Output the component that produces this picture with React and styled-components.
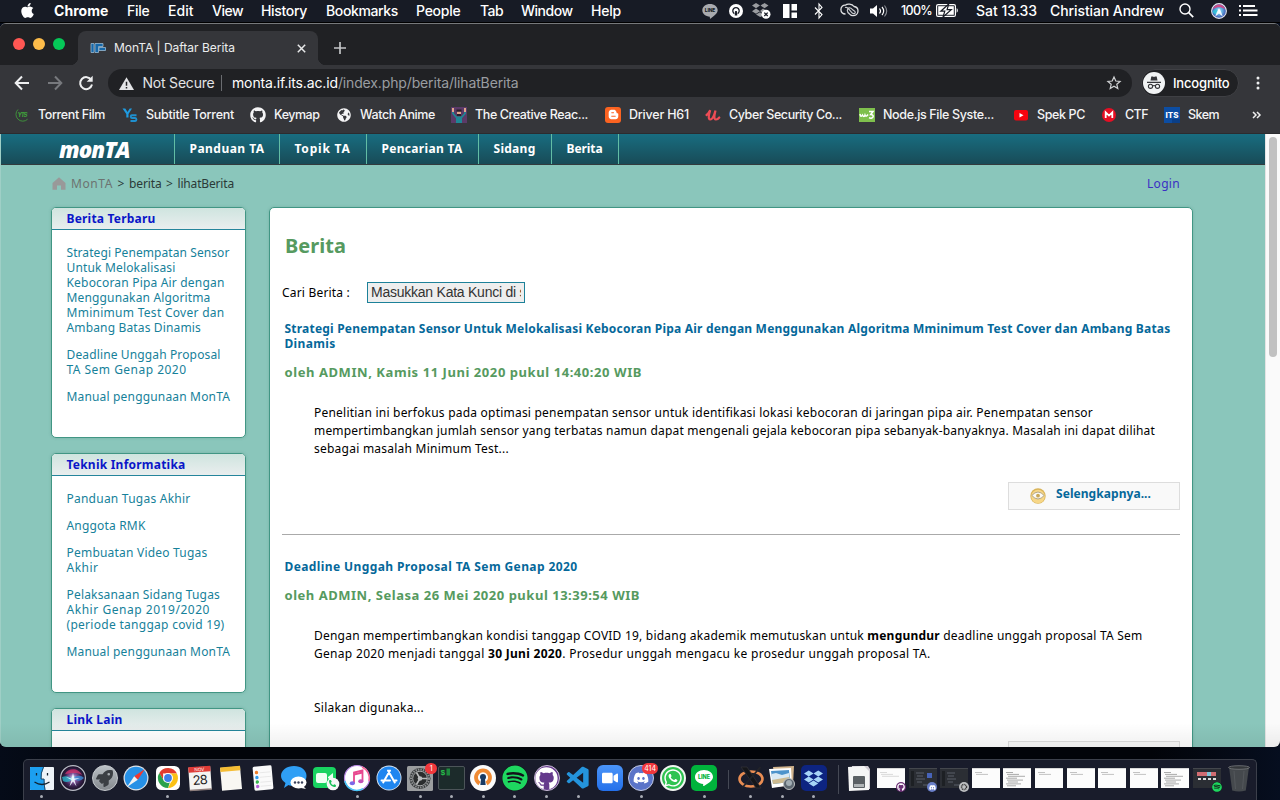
import React, { useLayoutEffect, useRef, useState } from "react";
import styled, { createGlobalStyle, css } from "styled-components";
import {
  FaApple, FaDropbox, FaGithub, FaBluetoothB, FaSpotify, FaWhatsapp, FaDiscord,
  FaBloggerB, FaVideo, FaRocket, FaPhoneAlt, FaGlobeAmericas,
} from "react-icons/fa";
import { VscVscode } from "react-icons/vsc";

const Global = createGlobalStyle`
  * { box-sizing: border-box; }
  body { margin: 0; background: #03060d; overflow: hidden; }
  svg { display: block; overflow: visible; }
`;

const ui = `Inter, Roboto, "Liberation Sans", sans-serif`;
const web = `"Noto Sans", "Open Sans", "Liberation Sans", sans-serif`;

/* Text tracked so that it fills a given width */
const Track = styled.span`
  display: inline-block;
  white-space: pre;
  flex: none;
  width: ${(p) => p.$w}px;
`;
function Fit({ w, box, children }) {
  const ref = useRef(null);
  const [spacing, setSpacing] = useState(0);
  useLayoutEffect(() => {
    const el = ref.current;
    const n = el.textContent.length;
    setSpacing((w - el.getBoundingClientRect().width) / n);
  }, [w]);
  return (
    <Track $w={box || w}>
      <span ref={ref} style={{ letterSpacing: spacing }}>{children}</span>
    </Track>
  );
}

/* ---------- desktop ---------- */
const Desktop = styled.div`
  width: 1280px;
  height: 800px;
  display: flex;
  flex-direction: column;
  overflow: hidden;
  background: linear-gradient(90deg, #050b18, #020409 12%, #020409 90%, #060e1f);
  font-family: ${ui};
`;
const MenuBar = styled.div`
  height: 23px;
  flex: none;
  display: flex;
  align-items: center;
  padding: 0 0 1px 19px;
  background: #171b25;
  border-bottom: 1px solid #000;
  color: #fff;
  font-size: 14px;
  font-weight: 500;
  line-height: 22px;
`;
const MenuSlot = styled.div`
  width: ${(p) => p.$w}px;
  flex: none;
  display: flex;
  align-items: center;
  height: 22px;
  font-weight: ${(p) => (p.$bold ? 700 : 500)};
  font-size: ${(p) => p.$size || 14}px;
  color: #fff;
`;

const menus = [
  ["Chrome", 54.5, 73, true], ["File", 22.5, 41], ["Edit", 25.5, 44], ["View", 31, 49],
  ["History", 46, 65], ["Bookmarks", 72, 90], ["People", 44.5, 64], ["Tab", 23, 41],
  ["Window", 51.5, 70], ["Help", 30, 111],
];

/* ---------- window ---------- */
const Window = styled.div`
  height: 724px;
  flex: none;
  display: flex;
  flex-direction: column;
  overflow: hidden;
  border-top: 1px solid #77797b;
  border-radius: 6px;
  background: #35363a;
  position: relative;
`;
const TabStrip = styled.div`
  height: 41px;
  flex: none;
  display: flex;
  align-items: flex-end;
  background: #202124;
  padding-left: 13px;
`;
const Lights = styled.div`
  display: flex;
  gap: 8px;
  height: 34px;
  width: 65px;
  padding-top: 7px;
`;
const Light = styled.i`
  width: 12px;
  height: 12px;
  border-radius: 50%;
  background: ${(p) => p.$c};
`;
const Tab = styled.div`
  width: 240px;
  height: 34px;
  display: flex;
  align-items: center;
  padding: 0 12px 0 12px;
  border-radius: 8px 8px 0 0;
  background: #35363a;
  color: #eceded;
  font-size: 12px;
  position: relative;
  &::before, &::after {
    content: "";
    position: absolute;
    bottom: 0;
    width: 8px;
    height: 8px;
  }
  &::before { left: -8px; background: radial-gradient(circle at 0 0, #202124 8px, #35363a 8.5px); }
  &::after { right: -8px; background: radial-gradient(circle at 100% 0, #202124 8px, #35363a 8.5px); }
`;
const TabTitle = styled.div`
  flex: 1;
  margin-left: 8px;
  line-height: 16px;
`;
const NewTab = styled.div`
  height: 34px;
  padding: 11px 0 0 16px;
`;
const Toolbar = styled.div`
  height: 36px;
  flex: none;
  display: flex;
  align-items: center;
  padding-left: 14px;
`;
const ToolSlot = styled.div`
  width: ${(p) => p.$w}px;
  flex: none;
`;
const Omnibox = styled.div`
  width: 1024px;
  height: 28px;
  display: flex;
  align-items: center;
  border-radius: 14px;
  padding: 0 11px;
  background: #202124;
  color: #9a9da1;
  font-size: 14px;
  line-height: 20px;
`;
const Secure = styled.div`
  display: flex;
  align-items: center;
  gap: 8.5px;
  margin-right: 10px;
  padding-right: 6px;
  border-right: 1px solid #6a6c70;
  height: 16px;
  color: #e3e4e6;
`;
const Host = styled.span`color: #fff;`;
const Spacer = styled.div`flex: 1;`;
const Incognito = styled.div`
  width: 98px;
  height: 28px;
  margin-left: 9px;
  display: flex;
  align-items: center;
  gap: 8px;
  border-radius: 14px;
  border: 1px solid #3f4044;
  background: #202124;
  padding-left: 1px;
  color: #fff;
  font-size: 13px;
  font-weight: 500;
`;
const Bookmarks = styled.div`
  height: 32px;
  flex: none;
  display: flex;
  align-items: center;
  gap: 16px;
  padding: 0 0 5px 14px;
  color: #f4f4f5;
  font-size: 12.5px;
  font-weight: 500;
  line-height: 16px;
`;
const Bookmark = styled.div`
  display: flex;
  align-items: center;
  gap: 8px;
`;
const BloggerTile = styled.div`
  width: 16px;
  height: 16px;
  display: flex;
  align-items: center;
  justify-content: center;
  border-radius: 3px;
  background: #fb6321;
  color: #fff;
`;
const GlobeSlot = styled.div`
  width: 16px;
  padding: 1px;
`;
const Overflow = styled.div`margin-left: 17px;`;

/* ---------- page ---------- */
const Viewport = styled.div`
  flex: 1;
  min-height: 0;
  display: flex;
  border-top: 1px solid #2b2c2f;
  font-family: ${web};
  font-size: 12px;
  line-height: 15px;
  color: #111;
`;
const Page = styled.div`
  width: 1265px;
  overflow: hidden;
  background: #8ac6bb;
  border-left: 1px solid #9fcfc6;
`;
const Scrollbar = styled.div`
  width: 15px;
  padding: 3px 3px 0 3px;
  border-left: 1px solid #e4e4e4;
  background: #fafafa;
`;
const Thumb = styled.div`
  width: 8px;
  height: 220px;
  border-radius: 4px;
  background: #c1c1c1;
`;
const TopNav = styled.div`
  height: 31px;
  display: flex;
  padding-left: 58px;
  background: linear-gradient(#186d80, #184b57);
  border-bottom: 1px solid #333b3e;
`;
const Brand = styled.div`
  width: 115px;
  color: #fff;
  font: italic 800 23px/30px "Open Sans", "Noto Sans", sans-serif;
  letter-spacing: -1px;
  span { display: inline-block; transform: scaleX(0.97); transform-origin: 0 0; }
`;
const NavLink = styled.div`
  border-left: 1px solid #62bda5;
  padding: 0 13.5px 0 14.5px;
  color: #fff;
  font-weight: 700;
  line-height: 29px;
  &:last-child { border-right: 1px solid #62bda5; }
`;
const Crumbs = styled.div`
  height: 42px;
  display: flex;
  align-items: center;
  padding: 0 85px 6px 51px;
  color: #2a3a38;
`;
const CrumbHome = styled.span`color: #6c7371; margin-left: 5px;`;
const Sep = styled.span`
  width: 16px;
  text-align: center;
`;
const Login = styled.span`color: #3a2fc4;`;
const Columns = styled.div`
  display: flex;
  align-items: flex-start;
  gap: 23px;
  padding-left: 50px;
`;
const Side = styled.div`
  width: 195px;
  display: flex;
  flex-direction: column;
  gap: 15px;
`;
const card = css`
  border: 1px solid #419684;
  border-radius: 5px;
  background: #fff;
  box-shadow: 0 0 3px rgba(60, 120, 105, 0.25);
`;
const SideCard = styled.div`
  ${card}
  height: ${(p) => p.$h}px;
  overflow: hidden;
`;
const SideHead = styled.div`
  height: 22px;
  padding-left: 14.5px;
  line-height: 21px;
  font-weight: 700;
  color: #0a16c8;
  background: linear-gradient(#cfe4df, #e9eeee);
  border-bottom: 1px solid #25859b;
`;
const SideList = styled.div`
  padding: 15px 0 0 14.5px;
  display: flex;
  flex-direction: column;
  gap: 12px;
  color: #16819a;
`;
const SideLink = styled.div`
  display: flex;
  flex-direction: column;
`;
const Main = styled.div`
  ${card}
  width: 924px;
  height: 700px;
  padding: 0 12px;
`;
const Heading = styled.h1`
  margin: 25px 0 0 3px;
  font-size: 20px;
  line-height: 26px;
  font-weight: 700;
  color: #569a60;
`;
const Search = styled.div`
  display: flex;
  align-items: center;
  gap: 17px;
  margin-top: 23px;
  color: #000;
`;
const SearchInput = styled.div`
  width: 158px;
  height: 21px;
  border: 1px solid #1d8199;
  background: #eee;
  padding: 0 3px;
  color: #333;
  font: 14px/19px "Liberation Sans", sans-serif;
  letter-spacing: -0.24px;
  div { overflow: hidden; white-space: nowrap; }
`;
const Title = styled.h2`
  margin: ${(p) => p.$top}px 0 0 2.5px;
  display: flex;
  flex-direction: column;
  font-size: 12px;
  line-height: 15px;
  font-weight: 700;
  color: #05689a;
`;
const Byline = styled.div`
  margin: 12px 0 0 2.5px;
  font-size: 13px;
  line-height: 18px;
  font-weight: 700;
  color: #569a60;
`;
const Body = styled.div`
  margin: 23px 0 0 32px;
  display: flex;
  flex-direction: column;
  line-height: 18px;
  color: #000;
`;
const Gap = styled.div`height: 36px;`;
const More = styled.div`
  width: 172px;
  height: 28px;
  margin: ${(p) => p.$top}px 0 0 auto;
  display: flex;
  align-items: flex-start;
  gap: 10px;
  padding: 3px 0 0 21px;
  border: 1px solid #ddd;
  background: #f9f9f9;
  color: #05689a;
  font-weight: 700;
  line-height: 16px;
  svg { margin-top: 2px; }
`;
const Rule = styled.div`
  height: 1px;
  margin-top: 24px;
  background: #aaa;
`;
const Shade = styled.div`
  position: absolute;
  left: 0;
  right: 0;
  bottom: 0;
  height: 24px;
  background: linear-gradient(rgba(0, 0, 0, 0), rgba(0, 0, 0, 0.06));
  pointer-events: none;
`;

/* ---------- dock ---------- */
const Dock = styled.div`
  width: 1234px;
  height: 42px;
  margin: 12px 0 0 23px;
  flex: none;
  display: flex;
  padding-left: 2px;
  border: 1px solid #3c404b;
  border-bottom: 0;
  border-radius: 5px 5px 0 0;
  background: #191c2b;
`;
const DockCell = styled.div`
  width: ${(p) => p.$w || 31.55}px;
  flex: none;
  display: flex;
  flex-direction: column;
  align-items: center;
  padding-top: 5px;
  position: relative;
`;
const Dot = styled.i`
  width: 3px;
  height: 3px;
  margin-top: 4px;
  border-radius: 50%;
  background: #a9acb4;
`;
const Divider = styled.div`
  width: 1px;
  height: ${(p) => p.$h}px;
  margin: ${(p) => p.$m};
  background: #454955;
`;
const Tile = styled.div`
  width: 26px;
  height: 26px;
  display: flex;
  align-items: center;
  justify-content: center;
  border-radius: ${(p) => p.$r || "50%"};
  background: ${(p) => p.$bg};
  color: ${(p) => p.$c || "#fff"};
  border: ${(p) => p.$b || "0"};
  svg { flex: none; }
`;
const Badge = styled.div`
  position: absolute;
  right: -1px;
  top: 3px;
  min-width: 12px;
  height: 11px;
  border-radius: 6px;
  padding: 0 2px;
  background: #f2373b;
  color: #fff;
  font: 7px/11px ${ui};
  text-align: center;
`;
const Thumbnail = styled.div`
  width: 28px;
  height: 20px;
  margin-top: 3px;
  padding: 1px 2px;
  background: ${(p) => (p.$dark ? "#2b2e34" : "#fcfcfc")};
  border-top: 1px solid ${(p) => (p.$dark ? "#44474d" : "#d8d8d8")};
  overflow: hidden;
`;
const Mini = styled.div`
  position: absolute;
  right: 1px;
  top: 22px;
  width: 10px;
  height: 10px;
  border-radius: 50%;
  display: flex;
  align-items: center;
  justify-content: center;
  background: ${(p) => p.$bg};
  color: ${(p) => p.$c || "#fff"};
`;

/* ---------- drawings ---------- */
const S = ({ w = 16, h, vb, children, ...rest }) => (
  <svg width={w} height={h || w} viewBox={vb || `0 0 ${w} ${h || w}`} fill="none" {...rest}>{children}</svg>
);
const sf = `Inter, sans-serif`;

const LineBubble = () => (
  <S w={16} h={16}><path d="M8 1c4.300 0 7.700 2.700 7.700 6.300 0 3-3.600 5.400-7 8.200-.7.500-1-.1-.8-1.800C3.600 13.600.3 10.900.3 7.300.3 3.700 3.700 1 8 1z" fill="#a9abaf" />
    <text x="2.700" y="9.300" fontSize="4.800" fontWeight="800" fontFamily={sf} fill="#171b25" textLength="10.600">LINE</text></S>
);
const VpnMenu = () => (
  <S w={14}><circle cx="7" cy="7" r="7" fill="#fff" /><path d="M5.400 9.600a3.200 3.200 0 1 1 3.200 0" stroke="#171b25" strokeWidth="1.300" fill="none" /><path d="M6.200 7h1.600l.5 4.500H5.700z" fill="#171b25" /></S>
);
const DropboxMenu = () => (
  <S w={20} h={17}><g fill="#9a9ca0"><path d="m5 1 4 2.600-4 2.600-4-2.600zM13.500 1l4 2.600-4 2.600-4-2.600zM5 6.600l4 2.600-4 2.600-4-2.600zM12 6.600l3 2-3 3-3-2.500zM5 12.600l4-2.400 2 1.500v2.600L9.200 15z" /></g>
    <circle cx="15" cy="12.300" r="4.500" fill="#fff" /><path d="m13.300 10.600 3.400 3.400m0-3.400L13.300 14" stroke="#171b25" strokeWidth="1.300" /></S>
);
const GridMenu = () => (<S w={14} h={14}><path d="M0 0h6.500v14H0zM8.500 0H14v6.500H8.500zM8.500 8.500H14V14H8.500z" fill="#fff" /></S>);
const CloudMenu = () => (
  <S w={19} h={15}><path d="M5.500 11C2.500 11 .9 9 .9 6.500S3 2 5.300 2.200C7 .6 12 .5 14 3.500c2.500.3 4 2 4 4.500 0 3-2.400 4.600-5 4.600-2 0-3.200-1-4.400-2.500" stroke="#e0e1e3" strokeWidth="1.300" />
    <path d="M9 10.500c-2-1.400-2.500-5 .2-5.700 2-.5 3.300 2 4.500 2.800 1.200.8 2 1.500 1.300 2.500s-2.300.6-3.200-.5L8 5.200M5 4.500c2-.8 3.500.5 4.800 2.500" stroke="#c6c8cb" strokeWidth="1.200" /></S>
);
const BluetoothMenu = () => (<S w={10} h={16}><path d="m1 4.500 7 7L5 15V1l3 3.500-7 7" stroke="#fff" strokeWidth="1.100" /></S>);
const Volume = () => (
  <S w={18} h={14}><path d="M0 4.500h3L7 1v12L3 9.500H0z" fill="#fff" /><path d="M9.500 4.500c1.200 1.500 1.200 3.500 0 5M12 3c2 2.400 2 5.600 0 8" stroke="#fff" strokeWidth="1.200" /><path d="M14.500 1.500c2.700 3.300 2.700 7.700 0 11" stroke="#8b8e95" strokeWidth="1.100" /></S>
);
const Battery = () => (
  <S w={23} h={13}><rect x=".6" y=".6" width="18.800" height="11.800" rx="1.500" stroke="#fff" strokeWidth="1.200" /><path d="M2.200 2.200h15.600v8.600H2.200z" fill="#fff" /><path d="M20.600 4.300c1.600.6 1.600 3.800 0 4.400z" fill="#fff" />
    <path d="M12.700 0 4.800 7.200h4L7 13l8.300-7.400h-4.200z" fill="#fff" stroke="#171b25" strokeWidth="1.200" /></S>
);
const Search14 = () => (<S w={15}><circle cx="6" cy="6" r="5" stroke="#fff" strokeWidth="1.400" /><path d="m9.700 9.700 4.500 4.500" stroke="#fff" strokeWidth="1.700" /></S>);
const SiriGlyph = () => (
  <S w={16} vb="0 0 26 26">
    <defs><radialGradient id="siriMenu"><stop offset="0" stopColor="#fff" /><stop offset=".35" stopColor="#6fbfe8" /><stop offset="1" stopColor="#3c4fb0" /></radialGradient></defs>
    <circle cx="13" cy="13" r="12" fill="url(#siriMenu)" stroke="#e6e8ec" strokeWidth="1.800" />
    <path d="M3 10C6 0 20 0 23 10 16 6 10 6 3 10z" fill="#e0427c" opacity=".85" /><path d="M2 14c4-5 8-4 11 0-3 5-7 6-10 1z" fill="#2fc6d8" opacity=".8" /><path d="m13 8 4 8 2 6-6-5-6 5 2-6z" fill="#fff" opacity=".9" />
  </S>
);
const SiriDock = () => (
  <S w={26}>
    <defs><radialGradient id="siriDock"><stop offset="0" stopColor="#dff6ff" /><stop offset=".3" stopColor="#8d5fa8" /><stop offset=".65" stopColor="#3a2350" /><stop offset="1" stopColor="#160f22" /></radialGradient></defs>
    <circle cx="13" cy="13" r="12.400" fill="url(#siriDock)" stroke="#b9bcc6" strokeWidth="1.200" />
    <path d="M5 9c3-6 13-7 17 1-5-3-10-2-17-1z" fill="#d8336f" opacity=".75" />
    <path d="M2 12c5-2 8 0 11 2-3 3-7 4-10 2z" fill="#27bfd0" opacity=".75" />
    <path d="M13 13c4-3 8-3 11 0-3 3-7 4-11 0z" fill="#3b8fd8" opacity=".8" />
    <path d="m13 8 1.500 5.500L20 13l-5.500 2 2 6.500-3.500-5-3.500 5 2-6.500L6 12l5.500 1.500z" fill="#f1fbff" opacity=".9" />
  </S>
);
const ListIcon = () => (<S w={19} h={13}><path d="M0 2h2M0 6.500h2M0 11h2M4 2h12M4 6.500h14.500M4 11h14.500" stroke="#fff" strokeWidth="2" /></S>);

const Fav = () => (<S w={16} h={14}><path d="M1 2.500h3v9H1zM5 2.500h8v3H8.500v6H5zM9 6.500h6.500v3H9z" fill="#1667a8" stroke="#98b9d2" strokeWidth=".8" /></S>);
const Cross = () => (<S w={9}><path d="m.8.800 7.400 7.400m0-7.400L.8 8.200" stroke="#e8e9ea" strokeWidth="1.500" /></S>);
const Plus = () => (<S w={12}><path d="M6 0v12M0 6h12" stroke="#c2c4c6" strokeWidth="1.700" /></S>);
const Arrow = ({ c, d }) => (<S w={16}><path d={d} stroke={c} strokeWidth="2" /></S>);
const Reload = () => (<S w={16}><path d="M13.300 5A6 6 0 1 0 14 9.500" stroke="#eeeff0" strokeWidth="2" /><path d="M14.700.8v6H8.700z" fill="#eeeff0" /></S>);
const Warn = () => (<S w={15} h={13}><path d="M7.500.2 15 13H0z" fill="#e3e4e6" /><path d="M7.500 4.800v4M7.500 10v1.500" stroke="#202124" strokeWidth="1.500" /></S>);
const Star = () => (<S w={14} h={14}><path d="m7 1 1.800 4 4.300.4-3.300 2.900 1 4.300L7 10.300l-3.800 2.300 1-4.300L.9 5.400 5.200 5z" stroke="#d0d2d4" strokeWidth="1.200" /></S>);
const Spy = () => (
  <S w={22}><circle cx="11" cy="11" r="11" fill="#f1f3f4" /><path d="M7.500 8.600 8.300 4.600h1.500l1.200.5 1.200-.5h1.500l.8 4z" fill="#35363a" /><path d="M4 10.300h14" stroke="#35363a" strokeWidth="1.200" /><g stroke="#35363a" strokeWidth="1.100"><circle cx="7.500" cy="14.300" r="2.100" /><circle cx="14.500" cy="14.300" r="2.100" /><path d="M9.600 14q1.400-1 2.800 0" /></g></S>
);
const Dots = () => (<S w={4} h={14}><g fill="#eeeff0"><circle cx="2" cy="2" r="1.500" /><circle cx="2" cy="7" r="1.500" /><circle cx="2" cy="12" r="1.500" /></g></S>);

const Yts = () => (<S w={16}><path d="M4 2.500a6.300 6.300 0 1 0 9.600 9.700" stroke="#3f8f3b" strokeWidth="1" /><text x="3.500" y="10.300" fontSize="6" fontStyle="italic" fontWeight="800" fontFamily={sf} fill="#3f9b3a" textLength="10">YTS</text></S>);
const Ys = () => (
  <S w={16}>
    <path d="M.5 1.500h2.800L5.500 5l2.200-3.500h2.300L6.500 7v3.500H4.300V7z" fill="#1f9be0" />
    <path d="M14.500 8.300H9.800q-1 0-1 1.300t1 1.300h3.400q1.200 0 1.200 1.500T13.200 14H8.500" stroke="#1f8fce" strokeWidth="2" />
  </S>
);
const Creative = () => (<S w={16}><path d="M0 0h16v16H0z" fill="#5b3a68" /><path d="M5 9.500h6V16H5z" fill="#1f8795" /><path d="M2 3v3.500l3.500 4M14 3v3.500l-3.500 4" stroke="#1f8795" strokeWidth="1.800" /><path d="M1 1h2v4H1zM13 1h2v4h-2zM6 4h4v5H6z" fill="#e2a58c" /><path d="M5.500 2.500h5v2.300h-5zM6 7h4v2H6z" fill="#2a1e2a" /></S>);
const Udemy = () => (<S w={16}><path d="M1.500 8C3 7 4.200 5 5.200 3.200 4 7 2.700 12.500 5.300 12.500c2.200 0 4-4.500 5.200-9C9.600 7 8.300 12.500 11 12.500c1.500 0 2.500-1 3.300-2" stroke="#ee4c55" strokeWidth="2.200" strokeLinecap="round" /></S>);
const W3 = () => (<S w={16}><path d="M0 1h16v14H0z" fill="#7fc04d" /><path d="M1 7q.8 4 2.500 1 1.500 3 2.500 0 1 2.500 3-.5M10 4.500h4l-2.300 3c4 0 3 5-1.700 3.300" stroke="#fff" strokeWidth="1.500" /></S>);
const Yt = () => (<S w={16}><rect x="1" y="3" width="14" height="10.500" rx="2" fill="#f6040f" /><path d="m6.500 6 4 2.300-4 2.300z" fill="#fff" /></S>);
const Mega = () => (<S w={16}><circle cx="8" cy="8" r="7" fill="#e60f24" /><path d="M4.700 11V5.300L8 8.600l3.300-3.300V11" stroke="#fff" strokeWidth="1.800" /></S>);
const Its = () => (<S w={16}><path d="M0 0h16v16H0z" fill="#0c4da2" /><path d="M8 12h8v4H8z" fill="#0a3f88" /><text x="1.500" y="10.500" fontSize="7.500" fontWeight="800" fontFamily={sf} fill="#fff" textLength="13" lengthAdjust="spacingAndGlyphs">ITS</text></S>);
const Home = () => (<S w={14} h={13}><path d="M7 .3 13.500 6v6.700H9V8.500H5v4.200H.5V6z" fill="#999" /></S>);
const Eye = () => (<S w={16}><circle cx="8" cy="8" r="7.700" fill="#d9b45a" /><circle cx="8" cy="8.500" r="6.800" fill="#f7d788" /><path d="M1.800 7.500q6.200-7 12.400 0-6.200 7-12.400 0z" fill="#fbfaf6" stroke="#b3a88c" strokeWidth="1" /><circle cx="8" cy="7.700" r="1.900" fill="#c9a857" /></S>);

const Finder = () => (<S w={26}><rect x="1" y="2" width="24" height="23" rx="1" fill="#eef3f8" /><path d="M2 2h13q-3 6-2.500 12h3q0 6 1 11H2q-1 0-1-1V3q0-1 1-1z" fill="#1c9ff0" /><path d="M14.500 2q-3 6-2.500 12h3q0 6 1 11" stroke="#2b4054" strokeWidth=".9" /><path d="M7.500 8v2.500M18.500 8v2.500M5.500 17q7.500 5 15 0" stroke="#12212e" strokeWidth="1.300" /></S>);
const Safari = () => (<S w={26}><circle cx="13" cy="13" r="12.500" fill="#dfe3e8" /><circle cx="13" cy="13" r="11.300" fill="#2690e6" /><path d="M22 4 14.800 14.800 11.200 11.200z" fill="#f2382f" /><path d="m4 22 7.200-10.800 3.600 3.600z" fill="#f2f2f2" /></S>);
const Chrome = () => (<S w={26}><rect x="1" y="1" width="24" height="24" rx="5.500" fill="#fff" /><path d="M8 8.500h14a10 10 0 0 0-17.700-.5l4.500 8z" fill="#e33b2e" /><path d="M13 23a10 10 0 0 0 8.900-14.500H13L17 15z" fill="#fbc116" /><path d="M4.300 8 9 16l6 1-2 6A10 10 0 0 1 4.300 8z" fill="#2ba24c" /><circle cx="13" cy="13" r="5" fill="#fff" /><circle cx="13" cy="13" r="3.900" fill="#3f7fe8" /></S>);
const Calendar = () => (<S w={26}><g transform="rotate(-4 13 13)"><path d="M2 2h22v23H2z" fill="#f5f4f2" /><path d="M2 1.500h22V7H2z" fill="#df3b37" /><text x="8" y="6" fontSize="4.500" fontFamily={sf} fill="#fff">NOV</text><text x="5.500" y="19.500" fontSize="13" fontFamily={sf} fill="#222" textLength="15">28</text><path d="M2 24h22v1.500H2z" fill="#8d7d7b" /></g></S>);
const Notes = () => (<S w={26}><g transform="rotate(-5 13 13)"><path d="M3 2h20v23H3z" fill="#f8f7f2" /><path d="M3 1.500h20V6H3z" fill="#f5bd34" /></g></S>);
const Reminders = () => (<S w={26}><g transform="rotate(-5 13 13)"><rect x="3.500" y="1" width="19" height="24" rx="1.500" fill="#fafafa" /><circle cx="7" cy="7" r="1.700" fill="#f07f2c" /><circle cx="7" cy="12" r="1.700" fill="#2d9bf0" /><circle cx="7" cy="16.500" r="1.700" fill="#37b54d" /><circle cx="7" cy="21" r="1.700" fill="#b55dd6" /><path d="M10 7.500h11M10 12h11M10 17h11M10 21h11" stroke="#ddd" strokeWidth=".6" /></g></S>);
const Messages = () => (<S w={28} h={26}><path d="M14 1c7 0 12.500 4 12.500 10S21 21 14 21c-2 0-4-.3-5.500-1L4 23l1.500-5C3 16 1 14 1 11 1 5 7 1 14 1z" fill="#2f9ff5" /><ellipse cx="18.500" cy="17.500" rx="8" ry="6" fill="#fff" /><path d="m23 21 3 3-5-1z" fill="#fff" /><g fill="#38405a"><circle cx="15" cy="17.500" r="1.200" /><circle cx="18.500" cy="17.500" r="1.200" /><circle cx="22" cy="17.500" r="1.200" /></g></S>);
const Facetime = () => (<S w={28} h={26}><rect x="1" y="2" width="23" height="21" rx="4" fill="#18d361" /><rect x="4" y="8" width="11" height="10" rx="2" fill="#eefff3" /><path d="m16 12 5-4v9l-5-4z" fill="#eefff3" /><circle cx="21" cy="19" r="6.300" fill="#f6f6f6" /></S>);
const FacetimeCall = styled.div`position: absolute; left: 19px; top: 20px; color: #17bf57;`;
const Music = () => (<S w={26}><circle cx="13" cy="13" r="12.500" fill="#fff" stroke="#bc8be8" strokeWidth="1.200" /><path d="M.8 16A12.300 12.300 0 0 0 19 23.700" stroke="#45c7f5" strokeWidth="1.500" /><path d="M18 2A12.300 12.300 0 0 1 25 16" stroke="#f56593" strokeWidth="1.400" /><path d="M10 18V7.500L18.500 5.500V16" stroke="#e8488f" strokeWidth="1.800" /><path d="M10 9.500 18.500 7.500" stroke="#e8488f" strokeWidth="2" /><ellipse cx="8.300" cy="18.300" rx="2.600" ry="2" fill="#7c67e8" /><ellipse cx="16.800" cy="16.300" rx="2.600" ry="2" fill="#c14fb5" /></S>);
const AppStore = () => (<S w={26}><circle cx="13" cy="13" r="12.500" fill="#d9e5f2" /><circle cx="13" cy="13" r="11.600" fill="#1f86f0" /><path d="M12 5.500 18.800 17.500M14 5.500 7.200 17.500M5.500 15.500h8.500M17.500 15.500h3" stroke="#fff" strokeWidth="2" strokeLinecap="round" /></S>);
const Prefs = () => (<S w={26}><rect y="1" width="26" height="25" rx="1.500" fill="#9b9d9f" /><circle cx="13" cy="13.500" r="10.500" fill="#333638" /><circle cx="13" cy="13.500" r="9" stroke="#8f9192" strokeWidth="2" strokeDasharray="1.500 1" fill="none" /><circle cx="13" cy="13.500" r="7.300" stroke="#a7a9aa" strokeWidth="1" fill="#2b2d2e" /><path d="M13 13.500 9.500 7.500M13 13.500h7.300M13 13.500l-3.500 6" stroke="#b9bbbc" strokeWidth="1.600" /><circle cx="13" cy="13.500" r="2.300" fill="#b9bbbc" /></S>);
const Terminal = () => (<S w={27} h={26}><rect x=".5" y="1.500" width="26" height="23" rx="1.500" fill="#1c2b2b" stroke="#4c5459" /><text x="2.500" y="10" fontSize="8" fontWeight="700" fontFamily="Liberation Mono, monospace" fill="#27c24a">$</text><path d="M8.500 3.500h3.500v7H8.500z" fill="#1d8a3d" /></S>);
const Vpn = () => (<S w={26}><circle cx="13" cy="13" r="13" fill="#fbfbfb" /><path d="M9.500 18.500A7 7 0 1 1 16.500 18.500" stroke="#f08a33" strokeWidth="3.800" /><circle cx="13" cy="12" r="3" fill="#183a63" /><path d="M11.300 12h3.400l1 8h-5.400z" fill="#183a63" /></S>);
const Zoom = () => (<Tile $r="6px" $bg="linear-gradient(#4a94f8, #2470ea)"><FaVideo size={16} /></Tile>);
const LineApp = () => (<S w={20} h={20}><path d="M10 2c5 0 9 3 9 7 0 3.500-5 6.500-9 9-.8.400-1-.5-.8-2C4.500 15.500 1 13 1 9c0-4 4-7 9-7z" fill="#fff" /><text x="4" y="11" fontSize="5.500" fontWeight="800" fontFamily={sf} fill="#00b33c" textLength="12">LINE</text></S>);
const XQuartz = () => (<S w={28} h={26}><ellipse cx="14" cy="14" rx="11.500" ry="7.500" stroke="#e98d53" strokeWidth="2.600" /><path d="M4 2h6l14 21h-5z" fill="#15161a" stroke="#303136" strokeWidth=".8" /><path d="M23.500 2 5 23" stroke="#222329" strokeWidth="1.800" /></S>);
const Preview = () => (<S w={28} h={26}><path d="M5 2 26 1 25 20 8 22z" fill="#d2b48d" /><path d="m1 4 22-1 1 17-20 3z" fill="#fff" /><path d="m3 6 18-1 1 12-17 2z" fill="#4d93cb" /><path d="m4 14 17-3 1 6-17 2z" fill="#cdbb90" /><path d="M3.500 9 8 8l6 2 7-2v4L4 15z" fill="#d9e9f4" /><circle cx="21" cy="19" r="5.500" fill="#5d6770" stroke="#bfc1c2" /><circle cx="21" cy="18" r="3" fill="#a2adb3" /></S>);
const Doc = () => (<S w={26} h={27}><path d="M6 1h16l2 3v20H6z" fill="#cfcbd3" /><path d="m2 2 16-1 5 5v19l-20 1z" fill="#f5f5f5" /><rect x="7" y="11" width="12" height="12" rx="1" fill="#5b6064" /><path d="M8 19h10v3H8z" fill="#b0b4b6" /></S>);
const Trash = () => (<S w={26} h={28}><path d="M3 2h20l-3.200 23.500q-6.800 2-13.600 0z" fill="#45494d" /><ellipse cx="13" cy="2.500" rx="10.500" ry="1.800" fill="#34373b" stroke="#777a7d" strokeWidth=".8" /><path d="m8 6 1.500 18M18 6l-1.500 18" stroke="#54585c" strokeWidth="1" /></S>);
const Scribble = ({ n, c }) => (<S w={24} h={18}>{Array.from({ length: n }, (_, i) => (<path key={i} d={`M${(i % 3) + 1} ${2.5 + i * 1.9}h${7 + ((i * 5) % 11)}`} stroke={c} strokeWidth=".7" />))}</S>);
const ScribbleDark = ({ chat }) => (<S w={24} h={18}><path d="M0 1h3v15H0z" fill="#1d2024" /><path d="M5 3h8M6 6h6M5 9h9M6 12h5M12 15h8" stroke="#5a5f68" strokeWidth="1" />{chat && <path d="M16 3h5v5h-5z" fill="#4763b8" />}</S>);
const ScribbleTv = () => (<S w={24} h={18}><path d="M2 2h19v4H2z" fill="#d06c72" /><path d="M12 2h4v4h-4z" fill="#7fc5d8" /><path d="M3 9h3M8 9h3M13 9h3M18 9h3" stroke="#ddd" strokeWidth="2" /></S>);

/* ---------- data ---------- */
const bookmarks = [
  [<Yts />, "Torrent Film", 67, 68], [<Ys />, "Subtitle Torrent", 88], [<FaGithub size={16} />, "Keymap", 45.5, 46],
  [<GlobeSlot><FaGlobeAmericas size={14} /></GlobeSlot>, "Watch Anime", 75], [<Creative />, "The Creative Reac...", 113, 114],
  [<BloggerTile><FaBloggerB size={11} /></BloggerTile>, "Driver H61", 60],
  [<Udemy />, "Cyber Security Co...", 113, 114], [<W3 />, "Node.js File Syste...", 111, 114], [<Yt />, "Spek PC", 48],
  [<Mega />, "CTF", 23], [<Its />, "Skem", 31],
];
const nav = [["Panduan TA", 75, 76], ["Topik TA", 56, 58], ["Pencarian TA", 81, 83], ["Sidang", 42, 44], ["Berita", 36, 38]];
const panels = [
  { head: ["Berita Terbaru", 89], h: 231, links: [
    [["Strategi Penempatan Sensor", 163], ["Untuk Melokalisasi", 109], ["Kebocoran Pipa Air dengan", 158], ["Menggunakan Algoritma", 144], ["Mminimum Test Cover dan", 158], ["Ambang Batas Dinamis", 134.5]],
    [["Deadline Unggah Proposal", 154], ["TA Sem Genap 2020", 120]],
    [["Manual penggunaan MonTA", 163.5]],
  ] },
  { head: ["Teknik Informatika", 119], h: 240, links: [
    [["Panduan Tugas Akhir", 124]], [["Anggota RMK", 79]],
    [["Pembuatan Video Tugas", 141], ["Akhir", 32]],
    [["Pelaksanaan Sidang Tugas", 153.5], ["Akhir Genap 2019/2020", 143.5], ["(periode tanggap covid 19)", 158]],
    [["Manual penggunaan MonTA", 163.5]],
  ] },
  { head: ["Link Lain", 56], h: 150, links: [] },
];
const dockApps = [
  [<Finder />, 1], [<SiriDock />], [<Tile $bg="linear-gradient(#b9bfc4, #84898e)" $c="#3b3f44" $b="1px solid #c8ccd0"><FaRocket size={17} /></Tile>],
  [<Safari />], [<Chrome />, 1], [<Calendar />], [<Notes />], [<Reminders />], [<Messages />],
  [<><Facetime /><FacetimeCall><FaPhoneAlt size={7} /></FacetimeCall></>], [<Music />, 1], [<AppStore />],
  [<Prefs />, 1, "1"], [<Terminal />, 1], [<Vpn />, 1],
  [<Tile $bg="#13121a" $c="#1ed760"><FaSpotify size={26} /></Tile>, 1],
  [<Tile $bg="#64398c" $b="1px solid #cbbfd8"><FaGithub size={23} /></Tile>, 1],
  [<Tile $bg="transparent" $c="#2494dc"><VscVscode size={27} /></Tile>, 1],
  [<Zoom />], [<Tile $bg="#5b74c8" $b="1px solid #c4cbe4"><FaDiscord size={16} /></Tile>, 1, "414"],
  [<Tile $bg="#2fc351" $b="2px solid #f2f5f2"><FaWhatsapp size={20} /></Tile>],
  [<Tile $r="5px" $bg="#00b33c"><LineApp /></Tile>, 1],
];
const thumbs = [
  [3, "#ccc", false, <Mini $bg="#6b2f74"><FaGithub size={8} /></Mini>], ["chat", "", true, <Mini $bg="#6a7fc8"><FaDiscord size={7} /></Mini>],
  [0, "", true, <Mini $bg="#bdbfc1" $c="#333"><S w={8}><circle cx="4" cy="4" r="2.500" stroke="#333" strokeWidth="1.500" strokeDasharray="1 .6" /></S></Mini>],
  [2, "#aaa"], [8, "#888"], [2, "#aaa"], [2, "#aaa"], [2, "#aaa"], [2, "#aaa"], [8, "#888"],
  ["tv", "", true, <Mini $bg="#111" $c="#1ed760"><FaSpotify size={10} /></Mini>],
];

export default function App() {
  return (
    <Desktop>
      <Global />
      <MenuBar>
        <MenuSlot $w={35}><FaApple size={17} /></MenuSlot>
        {menus.map(([t, w, slot, bold]) => (<MenuSlot key={t} $w={slot} $bold={bold}><Fit w={w}>{t}</Fit></MenuSlot>))}
        <MenuSlot $w={27}><LineBubble /></MenuSlot>
        <MenuSlot $w={22}><VpnMenu /></MenuSlot>
        <MenuSlot $w={32}><DropboxMenu /></MenuSlot>
        <MenuSlot $w={31}><GridMenu /></MenuSlot>
        <MenuSlot $w={26}><BluetoothMenu /></MenuSlot>
        <MenuSlot $w={30}><CloudMenu /></MenuSlot>
        <MenuSlot $w={31}><Volume /></MenuSlot>
        <MenuSlot $w={35} $size={12.5}><Fit w={31}>100%</Fit></MenuSlot>
        <MenuSlot $w={40}><Battery /></MenuSlot>
        <MenuSlot $w={74}><Fit w={61}>Sat 13.33</Fit></MenuSlot>
        <MenuSlot $w={129}><Fit w={114}>Christian Andrew</Fit></MenuSlot>
        <MenuSlot $w={32}><Search14 /></MenuSlot>
        <MenuSlot $w={28}><SiriGlyph /></MenuSlot>
        <ListIcon />
      </MenuBar>

      <Window>
        <TabStrip>
          <Lights><Light $c="#ff5753" /><Light $c="#fdbc4a" /><Light $c="#05c858" /></Lights>
          <Tab><Fav /><TabTitle><Fit w={121}>MonTA | Daftar Berita</Fit></TabTitle><Cross /></Tab>
          <NewTab><Plus /></NewTab>
        </TabStrip>
        <Toolbar>
          <ToolSlot $w={33}><Arrow c="#eeeff0" d="M15 8H2M8 1.500 1.700 8 8 14.500" /></ToolSlot>
          <ToolSlot $w={31}><Arrow c="#77797d" d="M1 8h13M8 1.500 14.300 8 8 14.500" /></ToolSlot>
          <ToolSlot $w={30}><Reload /></ToolSlot>
          <Omnibox>
            <Secure><Warn /><Fit w={72} box={72.5}>Not Secure</Fit></Secure>
            <Fit w={286.5}><Host>monta.if.its.ac.id</Host>/index.php/berita/lihatBerita</Fit>
            <Spacer />
            <Star />
          </Omnibox>
          <Incognito><Spy /><Fit w={56.5}>Incognito</Fit></Incognito>
          <ToolSlot $w={17} />
          <Dots />
        </Toolbar>
        <Bookmarks>
          {bookmarks.map(([icon, t, w, box]) => (<Bookmark key={t}>{icon}<Fit w={w} box={box}>{t}</Fit></Bookmark>))}
          <Overflow><S w={9} h={8}><path d="m1 1 3 3-3 3m4-6 3 3-3 3" stroke="#eee" strokeWidth="1.500" /></S></Overflow>
        </Bookmarks>

        <Viewport>
          <Page>
            <TopNav>
              <Brand><span>monTA</span></Brand>
              {nav.map(([t, w, box]) => (<NavLink key={t}><Fit w={w} box={box}>{t}</Fit></NavLink>))}
            </TopNav>
            <Crumbs>
              <Home />
              <CrumbHome><Fit w={42}>MonTA</Fit></CrumbHome>
              <Sep>&gt;</Sep>
              <Fit w={32.5}>berita</Fit>
              <Sep>&gt;</Sep>
              <Fit w={56.5}>lihatBerita</Fit>
              <Spacer />
              <Login><Fit w={33}>Login</Fit></Login>
            </Crumbs>
            <Columns>
              <Side>
                {panels.map(({ head, h, links }) => (
                  <SideCard key={head[0]} $h={h}>
                    <SideHead><Fit w={head[1]}>{head[0]}</Fit></SideHead>
                    <SideList>
                      {links.map((lines) => (
                        <SideLink key={lines[0][0]}>{lines.map(([t, w]) => (<Fit key={t} w={w}>{t}</Fit>))}</SideLink>
                      ))}
                    </SideList>
                  </SideCard>
                ))}
              </Side>
              <Main>
                <Heading><Fit w={61}>Berita</Fit></Heading>
                <Search><Fit w={68}>Cari Berita :</Fit><SearchInput><div>Masukkan Kata Kunci di sini</div></SearchInput></Search>
                <Title $top={18}>
                  <Fit w={886}>Strategi Penempatan Sensor Untuk Melokalisasi Kebocoran Pipa Air dengan Menggunakan Algoritma Mminimum Test Cover dan Ambang Batas</Fit>
                  <Fit w={51}>Dinamis</Fit>
                </Title>
                <Byline><Fit w={357.5}>oleh ADMIN, Kamis 11 Juni 2020 pukul 14:40:20 WIB</Fit></Byline>
                <Body>
                  <Fit w={779}>Penelitian ini berfokus pada optimasi penempatan sensor untuk identifikasi lokasi kebocoran di jaringan pipa air. Penempatan sensor</Fit>
                  <Fit w={841}>mempertimbangkan jumlah sensor yang terbatas namun dapat mengenali gejala kebocoran pipa sebanyak-banyaknya. Masalah ini dapat dilihat</Fit>
                  <Fit w={195}>sebagai masalah Minimum Test...</Fit>
                </Body>
                <More $top={24}><Eye /><Fit w={95}>Selengkapnya...</Fit></More>
                <Rule />
                <Title $top={24}><Fit w={293}>Deadline Unggah Proposal TA Sem Genap 2020</Fit></Title>
                <Byline><Fit w={355.5}>oleh ADMIN, Selasa 26 Mei 2020 pukul 13:39:54 WIB</Fit></Byline>
                <Body>
                  <Fit w={828.5}>Dengan mempertimbangkan kondisi tanggap COVID 19, bidang akademik memutuskan untuk <b>mengundur</b> deadline unggah proposal TA Sem</Fit>
                  <Fit w={616.5}>Genap 2020 menjadi tanggal <b>30 Juni 2020</b>. Prosedur unggah mengacu ke prosedur unggah proposal TA.</Fit>
                  <Gap />
                  <Fit w={110}>Silakan digunaka...</Fit>
                </Body>
                <More $top={24} />
              </Main>
            </Columns>
          </Page>
          <Scrollbar><Thumb /></Scrollbar>
        </Viewport>
        <Shade />
      </Window>

      <Dock>
        {dockApps.map(([icon, dot, badge], i) => (
          <DockCell key={i}>{icon}{dot && <Dot />}{badge && <Badge>{badge}</Badge>}</DockCell>
        ))}
        <Divider $h={19} $m="10px 6px 0 8px" />
        <DockCell><XQuartz /><Dot /></DockCell>
        <DockCell><Preview /><Dot /></DockCell>
        <DockCell><Tile $r="5px" $bg="#0d2481" $c="#a7d5f7"><FaDropbox size={19} /></Tile><Dot /></DockCell>
        <Divider $h={29} $m="5px 5px 0 8px" />
        <DockCell><Doc /></DockCell>
        {thumbs.map(([n, c, dark, mini], i) => (
          <DockCell key={i} $w={31.6}>
            <Thumbnail $dark={dark}>{n === "tv" ? <ScribbleTv /> : dark ? <ScribbleDark chat={n === "chat"} /> : <Scribble n={n} c={c} />}</Thumbnail>
            {mini}
          </DockCell>
        ))}
        <DockCell><Trash /></DockCell>
      </Dock>
    </Desktop>
  );
}
